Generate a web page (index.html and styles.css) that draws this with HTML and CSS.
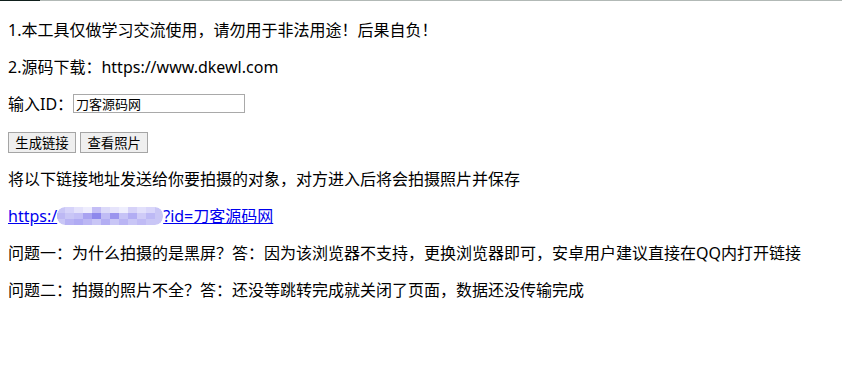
FILE: index.html
```html
<!doctype html>
<html lang="zh-cn">

<head>
    <meta charset="utf-8">
    <title>拍照</title>
    <link rel="stylesheet" href="styles.css">
</head>

<body>
    <p>1.本工具仅做学习交流使用，请勿用于非法用途！后果自负！</p>
    <p>2.源码下载：https://www.dkewl.com</p>
    <p>输入ID：<input type="text" name="id" class="idbox" value="刀客源码网"></p>
    <p class="btns">
        <input type="button" class="btn" value="生成链接">
        <input type="button" class="btn" value="查看照片">
    </p>
    <p>将以下链接地址发送给你要拍摄的对象，对方进入后将会拍摄照片并保存</p>
    <p class="linkrow"><a href="#">https:/<svg class="mosaic" width="106" height="18" viewBox="0 0 106 18">
        <rect x="0" y="0" width="106" height="18" rx="8" fill="#c9c6f6"/>
        <rect x="8" y="0" width="9" height="6" fill="#d6d3fa"/>
        <rect x="17" y="0" width="9" height="6" fill="#e4e2fb"/>
        <rect x="26" y="0" width="9" height="6" fill="#eeedfd"/>
        <rect x="35" y="0" width="9" height="6" fill="#c4bef6"/>
        <rect x="44" y="0" width="9" height="6" fill="#dcdaf9"/>
        <rect x="53" y="0" width="9" height="6" fill="#e6e4fb"/>
        <rect x="62" y="0" width="9" height="6" fill="#eeeefd"/>
        <rect x="71" y="0" width="9" height="6" fill="#d6d2f8"/>
        <rect x="80" y="0" width="9" height="6" fill="#e2e0fb"/>
        <rect x="89" y="0" width="9" height="6" fill="#d9d6fa"/>
        <rect x="0" y="6" width="8" height="6" fill="#bdb8f4"/>
        <rect x="17" y="6" width="9" height="6" fill="#c3bff6"/>
        <rect x="26" y="6" width="9" height="6" fill="#a9a3f1"/>
        <rect x="35" y="6" width="9" height="6" fill="#8e88ec"/>
        <rect x="44" y="6" width="9" height="6" fill="#c0bcf5"/>
        <rect x="53" y="6" width="9" height="6" fill="#9b95ee"/>
        <rect x="62" y="6" width="9" height="6" fill="#c6c3f6"/>
        <rect x="71" y="6" width="9" height="6" fill="#b2adf3"/>
        <rect x="80" y="6" width="9" height="6" fill="#cfcbf7"/>
        <rect x="89" y="6" width="9" height="6" fill="#bdb9f5"/>
        <rect x="8" y="12" width="9" height="6" fill="#b8b3f4"/>
        <rect x="17" y="12" width="9" height="6" fill="#b0abf3"/>
        <rect x="26" y="12" width="9" height="6" fill="#bcb7f4"/>
        <rect x="44" y="12" width="9" height="6" fill="#b3aef3"/>
        <rect x="62" y="12" width="9" height="6" fill="#bab5f4"/>
        <rect x="80" y="12" width="9" height="6" fill="#c0bbf5"/>
    </svg>?id=刀客源码网</a></p>
    <p>问题一：为什么拍摄的是黑屏？答：因为该浏览器不支持，更换浏览器即可，安卓用户建议直接在QQ内打开链接</p>
    <p>问题二：拍摄的照片不全？答：还没等跳转完成就关闭了页面，数据还没传输完成</p>
</body>

</html>
```

FILE: styles.css
```css
html {
    background: linear-gradient(to right, #0f1f1b 0 40px, #b2b9b6 40px) top left / 100% 1px no-repeat, #fff;
}
body {
    margin: 0 8px;
    padding-top: 4px;
    font-family: "Noto Sans", "Noto Sans CJK SC", sans-serif;
    font-size: 16px;
    line-height: 21px;
    color: #000;
}
p {
    margin: 16px 0;
}
.btns {
    margin-top: 17px;
    margin-bottom: 16px;
}
.linkrow {
    margin-top: 14px;
}
a {
    color: #0000ee;
}
.mosaic {
    vertical-align: -3px;
    border-radius: 8px;
}
.idbox {
    width: 166px;
    height: 17px;
    padding: 0 2px;
    border: 1px solid #a9a9a9;
    font-family: "Noto Sans CJK SC", sans-serif;
    font-size: 13px;
    vertical-align: 1px;
}
.btn {
    width: 68px;
    height: 21px;
    padding: 0;
    border: 1px solid #a5a5a5;
    background: #efefef;
    font-family: "Noto Sans CJK SC", sans-serif;
    font-size: 13.33px;
    color: #000;
}
```
